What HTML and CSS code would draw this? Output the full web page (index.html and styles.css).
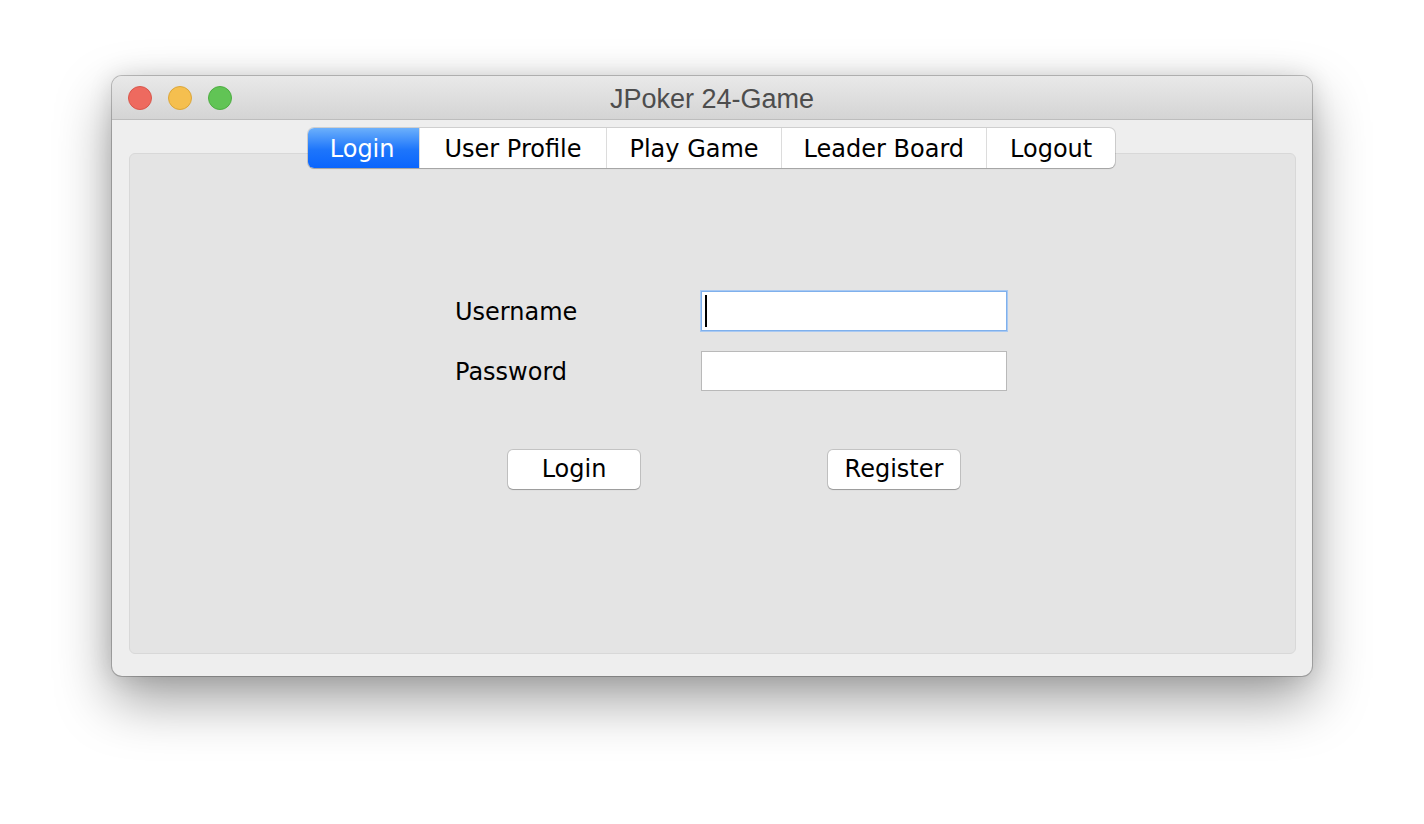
FILE: index.html
```html
<!DOCTYPE html>
<html>
<head>
<meta charset="utf-8">
<link rel="stylesheet" href="styles.css">
</head>
<body>
<div class="window">
  <div class="titlebar">
    <div class="lights">
      <span class="light red"></span>
      <span class="light yellow"></span>
      <span class="light green"></span>
    </div>
    <div class="title">JPoker 24-Game</div>
  </div>
  <div class="content">
    <div class="tabs">
      <div class="tab active">Login</div>
      <div class="tab">User Profile</div>
      <div class="tab">Play Game</div>
      <div class="tab">Leader Board</div>
      <div class="tab">Logout</div>
    </div>
    <div class="panel">
      <div class="form">
        <div class="label">Username</div>
        <div class="field focus"><span class="caret"></span></div>
        <div class="label">Password</div>
        <div class="field"></div>
      </div>
      <div class="buttons">
        <div class="btn">Login</div>
        <div class="btn">Register</div>
      </div>
    </div>
  </div>
</div>
</body>
</html>
```

FILE: styles.css
```css
html, body {
  margin: 0;
  padding: 0;
  background: #ffffff;
}
body {
  width: 1424px;
  height: 824px;
  overflow: hidden;
  font-family: "DejaVu Sans", sans-serif;
}
.window {
  margin: 76px 0 0 112px;
  width: 1200px;
  height: 600px;
  box-sizing: border-box;
  border-radius: 10px;
  background: #eeeeee;
  box-shadow: 0 0 0 1px rgba(0,0,0,0.22), 0 24px 55px rgba(0,0,0,0.38), 0 0 24px rgba(0,0,0,0.12);
  display: flex;
  flex-direction: column;
  overflow: hidden;
}
.titlebar {
  height: 43px;
  flex: none;
  background: linear-gradient(#e9e9e9, #d4d4d4);
  border-bottom: 1px solid #bdbdbd;
  display: flex;
  align-items: center;
  position: relative;
}
.lights {
  display: flex;
  gap: 16px;
  padding-left: 16px;
}
.light {
  width: 24px;
  height: 24px;
  border-radius: 50%;
  box-sizing: border-box;
}
.red { background: #ee6a5f; border: 1px solid #d8574c; }
.yellow { background: #f5bf4f; border: 1px solid #dba63a; }
.green { background: #61c455; border: 1px solid #4ead42; }
.title {
  position: absolute;
  left: 0;
  right: 0;
  text-align: center;
  font-family: "Liberation Sans", Arial, sans-serif;
  font-size: 27px;
  color: #4d4d4d;
  top: 8px;
}
.content {
  flex: 1;
  padding: 8px 16px 22px 17px;
  display: flex;
  flex-direction: column;
}
.tabs {
  align-self: center;
  display: flex;
  height: 40px;
  box-sizing: border-box;
  border-radius: 6px;
  background: #ffffff;
  box-shadow: 0 0 0 1px rgba(0,0,0,0.13), 0 1px 1px rgba(0,0,0,0.18);
  position: relative;
  z-index: 1;
  overflow: hidden;
  margin-left: -2px;
}
.tab {
  padding: 2px 23px 0;
  font-size: 24px;
  line-height: 38px;
  color: #000;
  border-left: 1px solid #dcdcdc;
}
.tab:first-child { border-left: none; }
.tab:nth-child(2) { padding: 2px 25px 0; }
.tab:nth-child(3) { padding: 2px 22px 0; }
.tab:nth-child(4) { padding: 2px 22px 0; }
.tab.active {
  background: linear-gradient(#6cb0fb, #1d75fb 55%, #0a65fd);
  color: #fff;
  padding: 2px 24px 0 22px;
  border-left: none;
}
.panel {
  flex: 1;
  margin-top: -15px;
  background: #e4e4e4;
  border: 1px solid #d8d8d8;
  border-radius: 6px;
  padding: 137px 0 0 325px;
}
.form {
  display: grid;
  grid-template-columns: 246px 306px;
  grid-auto-rows: 40px;
  row-gap: 20px;
}
.label {
  font-size: 24px;
  color: #000;
  line-height: 40px;
  padding-top: 1px;
}
.field {
  background: #fff;
  border: 1px solid #b9b9b9;
  box-sizing: border-box;
  position: relative;
}
.field.focus {
  border: 1px solid #7fb0ec;
  box-shadow: 0 0 0 1px #a9c9f2;
}
.caret {
  position: absolute;
  left: 3px;
  top: 3px;
  width: 2px;
  height: 32px;
  background: #000;
}
.buttons {
  display: flex;
  gap: 188px;
  margin: 59px 0 0 53px;
}
.btn {
  width: 132px;
  height: 39px;
  box-sizing: border-box;
  background: #fff;
  border-radius: 5px;
  box-shadow: 0 0 0 1px rgba(0,0,0,0.14), 0 1px 1px rgba(0,0,0,0.22);
  font-size: 24px;
  line-height: 39px;
  text-align: center;
  color: #000;
}
```
